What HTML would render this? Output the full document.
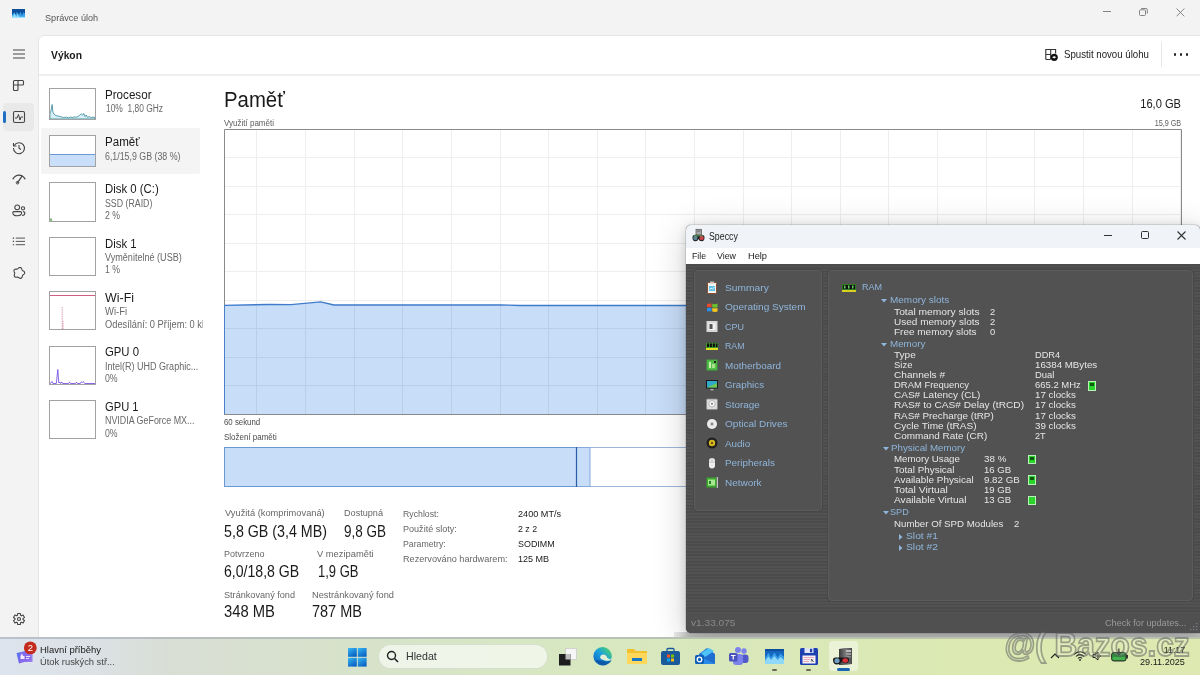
<!DOCTYPE html>
<html><head><meta charset="utf-8"><style>
html,body{margin:0;padding:0;}
body{width:1200px;height:675px;overflow:hidden;position:relative;background:#f3f3f3;font-family:"Liberation Sans", sans-serif;}
.t{position:absolute;white-space:nowrap;line-height:1;}
.r{position:absolute;}
svg.r{overflow:visible;}
</style></head><body>
<svg class="r" style="left:12px;top:8.7px" width="13" height="9" viewBox="0 0 13 9"><rect x="0" y="0" width="13" height="9" fill="#0d4f9a"/><path d="M0 6 L2.5 3 L3.5 6.5 L5 2.5 L6.5 7 L8.5 2.5 L10 6.5 L11.5 3 L13 5 V9 H0Z" fill="#3aa0ec"/><path d="M0 8 L3 4.5 L4.2 8 L6 4 L7 8 H13 V9 H0Z" fill="#8fdcfb"/><rect x="0" y="7.8" width="13" height="1.2" fill="#9ee2ff"/></svg>
<div class="t" style="left:44.8px;top:12.90px;font-size:9.8px;color:#555;font-weight:normal;transform:scaleX(0.9300);transform-origin:left 0;">Správce úloh</div>
<div class="r" style="left:1103px;top:10.5px;width:8px;height:1px;background:#858585"></div>
<svg class="r" style="left:1139px;top:7.5px" width="9" height="8" viewBox="0 0 9 8"><rect x="0.5" y="1.8" width="6" height="5.7" rx="1" fill="none" stroke="#858585" stroke-width="1"/><path d="M2.2 0.5 H7 a1.3 1.3 0 0 1 1.3 1.3 V5.6" fill="none" stroke="#858585" stroke-width="1"/></svg>
<svg class="r" style="left:1175.5px;top:7.5px" width="9" height="9" viewBox="0 0 9 9"><path d="M0.5 0.5 L8.3 8.3 M8.3 0.5 L0.5 8.3" stroke="#858585" stroke-width="1"/></svg>
<svg class="r" style="left:12px;top:48px" width="14" height="12" viewBox="0 0 14 12"><path d="M1 2H13M1 6H13M1 10H13" stroke="#444" stroke-width="1.1"/></svg>
<svg class="r" style="left:12px;top:79px" width="13" height="13" viewBox="0 0 13 13"><path d="M2.5 1.5 H10.5 A1 1 0 0 1 11.5 2.5 V5 A1 1 0 0 1 10.5 6 H6 V10.5 A1 1 0 0 1 5 11.5 H2.5 A1 1 0 0 1 1.5 10.5 V2.5 A1 1 0 0 1 2.5 1.5Z M6 1.5 V6 M1.5 6 H6" fill="none" stroke="#444" stroke-width="1.1"/></svg>
<div class="r" style="left:3px;top:103px;width:31px;height:28px;background:#e9e9e9;border-radius:4px"></div>
<div class="r" style="left:3px;top:111px;width:2.5px;height:12px;background:#1f6fc5;border-radius:2px"></div>
<svg class="r" style="left:12px;top:110px" width="14" height="14" viewBox="0 0 14 14"><rect x="1.5" y="1.5" width="11" height="11" rx="1.5" fill="none" stroke="#444" stroke-width="1.1"/><path d="M3 8 L5 8 L6.5 4.5 L8 10 L9 7 L11 7" fill="none" stroke="#444" stroke-width="1"/></svg>
<svg class="r" style="left:12px;top:141px" width="14" height="14" viewBox="0 0 14 14"><path d="M2.2 4.5 A5.5 5.5 0 1 1 1.5 7" fill="none" stroke="#444" stroke-width="1.1"/><path d="M1.5 2 V5 H4.5" fill="none" stroke="#444" stroke-width="1.1"/><path d="M7 4 V7.2 L9 8.5" fill="none" stroke="#444" stroke-width="1.1"/></svg>
<svg class="r" style="left:12px;top:173px" width="14" height="12" viewBox="0 0 14 12"><path d="M1 5.8 Q3.5 2.2 7 2.2 Q10.5 2.2 13 5.8" fill="none" stroke="#444" stroke-width="1.3" stroke-linecap="round"/><path d="M5.6 9.6 L10 3.2" stroke="#444" stroke-width="1.2" stroke-linecap="round"/><circle cx="5.5" cy="9.7" r="1.3" fill="none" stroke="#444" stroke-width="1"/></svg>
<svg class="r" style="left:11.5px;top:203.5px" width="14" height="13" viewBox="0 0 14 13"><circle cx="5.2" cy="3.3" r="2.4" fill="none" stroke="#444" stroke-width="1.05"/><path d="M1.8 7.6 H8.6 Q9.6 7.6 9.6 8.8 Q9.6 11.8 5.2 11.8 Q0.8 11.8 0.8 8.8 Q0.8 7.6 1.8 7.6Z" fill="none" stroke="#444" stroke-width="1.05"/><circle cx="11" cy="4.3" r="1.6" fill="none" stroke="#444" stroke-width="1.05"/><path d="M11 7.6 Q12.9 7.6 12.9 8.8 Q12.9 11.5 10 11.6" fill="none" stroke="#444" stroke-width="1.05"/></svg>
<svg class="r" style="left:12px;top:235px" width="14" height="12" viewBox="0 0 14 12"><path d="M3.8 3.1H13M3.8 6.4H13M3.8 9.7H13" stroke="#444" stroke-width="0.9"/><path d="M0.8 3.1H2.1M0.8 6.4H2.1M0.8 9.7H2.1" stroke="#444" stroke-width="1.1"/></svg>
<svg class="r" style="left:12px;top:266px" width="14" height="14" viewBox="0 0 14 14"><path d="M12.67 7.00 L12.45 7.57 L12.04 8.07 L11.56 8.48 L11.10 8.82 L10.74 9.16 L10.50 9.55 L10.36 10.03 L10.24 10.60 L10.06 11.21 L9.76 11.77 L9.31 12.19 L8.75 12.39 L8.14 12.36 L7.54 12.13 L7.00 11.79 L6.53 11.46 L6.10 11.22 L5.66 11.12 L5.16 11.13 L4.58 11.20 L3.94 11.21 L3.31 11.10 L2.78 10.80 L2.41 10.33 L2.26 9.74 L2.29 9.10 L2.44 8.48 L2.61 7.93 L2.71 7.45 L2.67 7.00 L2.50 6.53 L2.26 5.99 L2.05 5.39 L1.96 4.76 L2.08 4.16 L2.41 3.67 L2.93 3.34 L3.55 3.17 L4.18 3.12 L4.76 3.11 L5.24 3.06 L5.66 2.88 L6.06 2.57 L6.49 2.18 L7.00 1.79 L7.58 1.52 L8.18 1.44 L8.75 1.61 L9.23 2.00 L9.58 2.54 L9.82 3.12 L10.00 3.67 L10.21 4.11 L10.50 4.45 L10.92 4.74 L11.43 5.03 L11.95 5.39 L12.39 5.85 L12.65 6.41 L12.67 7.00Z" fill="none" stroke="#444" stroke-width="1.1" stroke-linejoin="round"/></svg>
<svg class="r" style="left:11.5px;top:612px" width="14" height="14" viewBox="0 0 14 14"><path d="M5.62 1.47 L8.38 1.47 L8.63 3.35 L9.46 3.85 L11.10 3.04 L12.48 5.43 L10.98 6.58 L10.96 7.56 L12.48 8.57 L11.10 10.96 L9.35 10.24 L8.50 10.71 L8.38 12.53 L5.62 12.53 L5.37 10.65 L4.54 10.15 L2.90 10.96 L1.52 8.57 L3.02 7.42 L3.04 6.44 L1.52 5.43 L2.90 3.04 L4.65 3.76 L5.50 3.29Z" fill="none" stroke="#444" stroke-width="1.1" stroke-linejoin="round"/><circle cx="7" cy="7" r="1.5" fill="none" stroke="#444" stroke-width="1.1"/></svg>
<div class="r" style="left:37.5px;top:35px;width:1170px;height:610px;background:#fff;border:1px solid #e6e6e6;border-radius:6px 0 0 0;box-sizing:border-box"></div>
<div class="t" style="left:50.8px;top:50.21px;font-size:11.8px;color:#1a1a1a;font-weight:bold;transform:scaleX(0.8754);transform-origin:left 0;">Výkon</div>
<div class="r" style="left:38.5px;top:74px;width:1161px;height:2px;background:#efefef"></div>
<svg class="r" style="left:1044px;top:48px" width="15" height="14" viewBox="0 0 15 14"><path d="M1.8 11.5 V1.5 H11.6 V5.5 M1.8 11.5 H6.5 M6.7 1.5 V11.5 M1.8 6.5 H7" fill="none" stroke="#333" stroke-width="1.1"/><circle cx="10.2" cy="9.3" r="3.6" fill="#111"/><path d="M8.2 9.3 L10.2 8 L12.2 9.3 L10.2 10.4Z" fill="#f0f0f0"/></svg>
<div class="t" style="left:1063.8px;top:49.07px;font-size:11.5px;color:#1a1a1a;font-weight:normal;transform:scaleX(0.8414);transform-origin:left 0;">Spustit novou úlohu</div>
<div class="r" style="left:1161px;top:42px;width:1px;height:25px;background:#e8e8e8"></div>
<div class="r" style="left:1173.8px;top:53px;width:2.6px;height:2.6px;background:#222;border-radius:50%"></div>
<div class="r" style="left:1179.8px;top:53px;width:2.6px;height:2.6px;background:#222;border-radius:50%"></div>
<div class="r" style="left:1185.8px;top:53px;width:2.6px;height:2.6px;background:#222;border-radius:50%"></div>
<div class="r" style="left:41px;top:128px;width:158.5px;height:46px;background:#f4f4f4;border-radius:2px"></div>
<svg class="r" style="left:49px;top:88px" width="47" height="32" viewBox="0 0 47 32"><rect x="0.5" y="0.5" width="46" height="31" fill="#fff" stroke="#a2a2a2" stroke-width="1"/><g transform="scale(0.979,1)"><path d="M1 30.5 L1 25 L2 23 L3.2 16.5 L4 24 L5 26 L7 27.5 L9 28 L12 28.7 L15 29.5 L18 29.2 L20 29.8 L22 29 L24 29.6 L26 28.8 L28 29.2 L30 28.2 L31.5 27 L33 25.8 L34.5 27.2 L35.5 25.5 L37 28.5 L38 27 L39.5 29.5 L41 28.5 L43 29.7 L45 29 L47 29.5 L47 31 L1 31Z" fill="#d6f0f6" stroke="#2a7f92" stroke-width="0.75"/></g><rect x="0.5" y="0.5" width="46" height="31" fill="none" stroke="#a2a2a2" stroke-width="1"/></svg>
<div class="t" style="left:105px;top:88.62px;font-size:12.5px;color:#1a1a1a;font-weight:normal;transform:scaleX(0.9296);transform-origin:left 0;">Procesor</div>
<div class="t" style="left:105.5px;top:104.33px;font-size:10px;color:#686868;font-weight:normal;transform:scaleX(0.8406);transform-origin:left 0;">10%&nbsp;&nbsp;1,80 GHz</div>
<svg class="r" style="left:49px;top:135px" width="47" height="32" viewBox="0 0 47 32"><rect x="0.5" y="0.5" width="46" height="31" fill="#fff" stroke="#a2a2a2" stroke-width="1"/><g transform="scale(0.979,1)"><rect x="1" y="19.5" width="46" height="11.5" fill="#c9def8"/><path d="M1 19.5 H47" stroke="#5a8fd4" stroke-width="0.9"/></g><rect x="0.5" y="0.5" width="46" height="31" fill="none" stroke="#a2a2a2" stroke-width="1"/></svg>
<div class="t" style="left:105px;top:135.62px;font-size:12.5px;color:#1a1a1a;font-weight:normal;transform:scaleX(0.9239);transform-origin:left 0;">Paměť</div>
<div class="t" style="left:105.3px;top:151.53px;font-size:10px;color:#686868;font-weight:normal;transform:scaleX(0.8808);transform-origin:left 0;">6,1/15,9 GB (38 %)</div>
<svg class="r" style="left:49px;top:182px" width="47" height="40" viewBox="0 0 47 40"><rect x="0.5" y="0.5" width="46" height="39" fill="#fff" stroke="#a2a2a2" stroke-width="1"/><g transform="scale(0.979,1)"><path d="M1 39 L2 36.5 L3 39" fill="none" stroke="#4e9a3a" stroke-width="0.8"/></g><rect x="0.5" y="0.5" width="46" height="39" fill="none" stroke="#a2a2a2" stroke-width="1"/></svg>
<div class="t" style="left:104.7px;top:182.92px;font-size:12.5px;color:#1a1a1a;font-weight:normal;transform:scaleX(0.9097);transform-origin:left 0;">Disk 0 (C:)</div>
<div class="t" style="left:104.7px;top:198.94px;font-size:10px;color:#686868;font-weight:normal;transform:scaleX(0.8795);transform-origin:left 0;">SSD (RAID)</div>
<div class="t" style="left:104.7px;top:211.03px;font-size:10px;color:#686868;font-weight:normal;transform:scaleX(0.8705);transform-origin:left 0;">2 %</div>
<svg class="r" style="left:49px;top:237px" width="47" height="39" viewBox="0 0 47 39"><rect x="0.5" y="0.5" width="46" height="38" fill="#fff" stroke="#a2a2a2" stroke-width="1"/><g transform="scale(0.979,1)"></g><rect x="0.5" y="0.5" width="46" height="38" fill="none" stroke="#a2a2a2" stroke-width="1"/></svg>
<div class="t" style="left:104.7px;top:237.62px;font-size:12.5px;color:#1a1a1a;font-weight:normal;transform:scaleX(0.9070);transform-origin:left 0;">Disk 1</div>
<div class="t" style="left:104.7px;top:253.03px;font-size:10px;color:#686868;font-weight:normal;transform:scaleX(0.9071);transform-origin:left 0;">Vyměnitelné (USB)</div>
<div class="t" style="left:104.7px;top:265.14px;font-size:10px;color:#686868;font-weight:normal;transform:scaleX(0.8705);transform-origin:left 0;">1 %</div>
<svg class="r" style="left:49px;top:291px" width="47" height="39" viewBox="0 0 47 39"><rect x="0.5" y="0.5" width="46" height="38" fill="#fff" stroke="#a2a2a2" stroke-width="1"/><g transform="scale(0.979,1)"><path d="M1 4.5 H47" stroke="#c84a6e" stroke-width="0.9"/><path d="M13.5 38 V16 M14.3 38 V30" fill="none" stroke="#d0708c" stroke-width="0.7" stroke-dasharray="1.5 0.8"/></g><rect x="0.5" y="0.5" width="46" height="38" fill="none" stroke="#a2a2a2" stroke-width="1"/></svg>
<div class="t" style="left:104.7px;top:291.72px;font-size:12.5px;color:#1a1a1a;font-weight:normal;transform:scaleX(0.9948);transform-origin:left 0;">Wi-Fi</div>
<div class="t" style="left:104.7px;top:307.34px;font-size:10px;color:#686868;font-weight:normal;transform:scaleX(0.9434);transform-origin:left 0;">Wi-Fi</div>
<div class="t" style="left:104.7px;top:319.84px;font-size:10px;color:#686868;font-weight:normal;transform:scaleX(0.9277);transform-origin:left 0;">Odesílání: 0 Příjem: 0 kl</div>
<svg class="r" style="left:49px;top:346px" width="47" height="39" viewBox="0 0 47 39"><rect x="0.5" y="0.5" width="46" height="38" fill="#fff" stroke="#a2a2a2" stroke-width="1"/><g transform="scale(0.979,1)"><path d="M1 37.5 L2 37 L3 35.5 L4 37.5 L7.5 37.5 L9 23.5 L10 37 L11 36 L12 37.5 L13 36 L14 37.5 L20 37.5 L21 36 L22 37.5 L27 37.5 L28 36.2 L29 37.5 L32 37.5 L33 35.8 L34 36.5 L35 35.5 L36.5 37.5 L47 37.5" fill="none" stroke="#6a40e0" stroke-width="0.8"/></g><rect x="0.5" y="0.5" width="46" height="38" fill="none" stroke="#a2a2a2" stroke-width="1"/></svg>
<div class="t" style="left:104.7px;top:345.92px;font-size:12.5px;color:#1a1a1a;font-weight:normal;transform:scaleX(0.9064);transform-origin:left 0;">GPU 0</div>
<div class="t" style="left:104.7px;top:362.24px;font-size:10px;color:#686868;font-weight:normal;transform:scaleX(0.9017);transform-origin:left 0;">Intel(R) UHD Graphic...</div>
<div class="t" style="left:104.7px;top:374.04px;font-size:10px;color:#686868;font-weight:normal;transform:scaleX(0.8718);transform-origin:left 0;">0%</div>
<svg class="r" style="left:49px;top:400px" width="47" height="39" viewBox="0 0 47 39"><rect x="0.5" y="0.5" width="46" height="38" fill="#fff" stroke="#a2a2a2" stroke-width="1"/><g transform="scale(0.979,1)"></g><rect x="0.5" y="0.5" width="46" height="38" fill="none" stroke="#a2a2a2" stroke-width="1"/></svg>
<div class="t" style="left:104.7px;top:400.62px;font-size:12.5px;color:#1a1a1a;font-weight:normal;transform:scaleX(0.8930);transform-origin:left 0;">GPU 1</div>
<div class="t" style="left:104.7px;top:416.34px;font-size:10px;color:#686868;font-weight:normal;transform:scaleX(0.8888);transform-origin:left 0;">NVIDIA GeForce MX...</div>
<div class="t" style="left:104.7px;top:428.74px;font-size:10px;color:#686868;font-weight:normal;transform:scaleX(0.8718);transform-origin:left 0;">0%</div>
<div class="r" style="left:203px;top:320px;width:10px;height:12px;background:#fff"></div>
<div class="t" style="left:223.6px;top:88.78px;font-size:22px;color:#1a1a1a;font-weight:normal;transform:scaleX(0.9251);transform-origin:left 0;">Paměť</div>
<div class="t" style="left:224.2px;top:119.00px;font-size:8.5px;color:#606060;font-weight:normal;transform:scaleX(0.9422);transform-origin:left 0;">Využití paměti</div>
<div class="t" style="right:18.700000000000045px;top:98.04px;font-size:12px;color:#1a1a1a;font-weight:normal;transform:scaleX(0.9267);transform-origin:right 0;">16,0 GB</div>
<div class="t" style="right:18.700000000000045px;top:118.80px;font-size:8.5px;color:#606060;font-weight:normal;transform:scaleX(0.8497);transform-origin:right 0;">15,9 GB</div>
<svg class="r" style="left:0;top:0" width="1200" height="675" viewBox="0 0 1200 675">
<rect x="224.5" y="129.5" width="957.0" height="285.0" fill="#fff"/>
<path d="M224 305.3 L269 304.5 L291 304.7 L320.6 301.8 L334 305 L500 304.8 L520 305.5 L1182 305.5 L1182 414.5 L224 414.5Z" fill="#c8ddf8"/>
<g stroke="#eeeeee" stroke-width="1" fill="none" style="mix-blend-mode:multiply"><path d="M224.5 157.5 H1181.5" /><path d="M224.5 186.5 H1181.5" /><path d="M224.5 214.5 H1181.5" /><path d="M224.5 243.5 H1181.5" /><path d="M224.5 271.5 H1181.5" /><path d="M224.5 300.5 H1181.5" /><path d="M224.5 328.5 H1181.5" /><path d="M224.5 357.5 H1181.5" /><path d="M224.5 385.5 H1181.5" /><path d="M256.5 129.5 V414.5" /><path d="M305.5 129.5 V414.5" /><path d="M354.5 129.5 V414.5" /><path d="M402.5 129.5 V414.5" /><path d="M451.5 129.5 V414.5" /><path d="M500.5 129.5 V414.5" /><path d="M548.5 129.5 V414.5" /><path d="M597.5 129.5 V414.5" /><path d="M645.5 129.5 V414.5" /><path d="M694.5 129.5 V414.5" /><path d="M743.5 129.5 V414.5" /><path d="M791.5 129.5 V414.5" /><path d="M840.5 129.5 V414.5" /><path d="M888.5 129.5 V414.5" /><path d="M937.5 129.5 V414.5" /><path d="M986.5 129.5 V414.5" /><path d="M1034.5 129.5 V414.5" /><path d="M1083.5 129.5 V414.5" /><path d="M1132.5 129.5 V414.5" /><path d="M1180.5 129.5 V414.5" /></g>
<path d="M224 305.3 L269 304.5 L291 304.7 L320.6 301.8 L334 305 L500 304.8 L520 305.5 L1182 305.5" fill="none" stroke="#3f7bcb" stroke-width="1.3"/>
<path d="M224.5 305 V414.5" fill="none" stroke="#4a80c8" stroke-width="1"/>
<path d="M224 414.5 H1181.5 V305" fill="none" stroke="#8a8a8a" stroke-width="1"/>
<path d="M224.5 305 V129.5 H1181.5 V305" fill="none" stroke="#8a8a8a" stroke-width="1"/>
<rect x="224.5" y="447.5" width="957" height="39" fill="#fff" stroke="#9db6da" stroke-width="1"/>
<rect x="224.5" y="447.5" width="352" height="39" fill="#c8ddf8" stroke="#6b98d2" stroke-width="1"/>
<rect x="576.5" y="447.5" width="13.5" height="39" fill="#c8ddf8" stroke="#86a9dc" stroke-width="1"/>
<path d="M576.5 447 V487" stroke="#2b5ca6" stroke-width="1.2"/>
</svg>
<div class="t" style="left:224.2px;top:417.80px;font-size:8.5px;color:#4a4a4a;font-weight:normal;transform:scaleX(0.9229);transform-origin:left 0;">60 sekund</div>
<div class="t" style="left:224.2px;top:433.20px;font-size:8.5px;color:#4a4a4a;font-weight:normal;transform:scaleX(0.9391);transform-origin:left 0;">Složení paměti</div>
<div class="t" style="left:224.5px;top:508.46px;font-size:9.5px;color:#666;font-weight:normal;transform:scaleX(0.9768);transform-origin:left 0;">Využitá (komprimovaná)</div>
<div class="t" style="left:224.2px;top:523.51px;font-size:15.7px;color:#1a1a1a;font-weight:normal;transform:scaleX(0.9081);transform-origin:left 0;">5,8 GB (3,4 MB)</div>
<div class="t" style="left:343.7px;top:508.46px;font-size:9.5px;color:#666;font-weight:normal;transform:scaleX(0.9590);transform-origin:left 0;">Dostupná</div>
<div class="t" style="left:343.7px;top:523.51px;font-size:15.7px;color:#1a1a1a;font-weight:normal;transform:scaleX(0.8594);transform-origin:left 0;">9,8 GB</div>
<div class="t" style="left:224.2px;top:548.76px;font-size:9.5px;color:#666;font-weight:normal;transform:scaleX(0.9468);transform-origin:left 0;">Potvrzeno</div>
<div class="t" style="left:224.2px;top:563.51px;font-size:15.7px;color:#1a1a1a;font-weight:normal;transform:scaleX(0.8987);transform-origin:left 0;">6,0/18,8 GB</div>
<div class="t" style="left:316.7px;top:548.76px;font-size:9.5px;color:#666;font-weight:normal;transform:scaleX(0.9835);transform-origin:left 0;">V mezipaměti</div>
<div class="t" style="left:317.5px;top:563.51px;font-size:15.7px;color:#1a1a1a;font-weight:normal;transform:scaleX(0.8287);transform-origin:left 0;">1,9 GB</div>
<div class="t" style="left:224.2px;top:589.96px;font-size:9.5px;color:#666;font-weight:normal;transform:scaleX(0.9603);transform-origin:left 0;">Stránkovaný fond</div>
<div class="t" style="left:224.2px;top:604.11px;font-size:15.7px;color:#1a1a1a;font-weight:normal;transform:scaleX(0.9425);transform-origin:left 0;">348 MB</div>
<div class="t" style="left:312px;top:589.96px;font-size:9.5px;color:#666;font-weight:normal;transform:scaleX(0.9705);transform-origin:left 0;">Nestránkovaný fond</div>
<div class="t" style="left:312px;top:604.11px;font-size:15.7px;color:#1a1a1a;font-weight:normal;transform:scaleX(0.9241);transform-origin:left 0;">787 MB</div>
<div class="t" style="left:403.2px;top:508.94px;font-size:9.4px;color:#666;font-weight:normal;transform:scaleX(0.9313);transform-origin:left 0;">Rychlost:</div>
<div class="t" style="left:518px;top:508.94px;font-size:9.4px;color:#1a1a1a;font-weight:normal;transform:scaleX(0.9728);transform-origin:left 0;">2400 MT/s</div>
<div class="t" style="left:403.2px;top:524.04px;font-size:9.4px;color:#666;font-weight:normal;transform:scaleX(0.9659);transform-origin:left 0;">Použité sloty:</div>
<div class="t" style="left:518px;top:524.04px;font-size:9.4px;color:#1a1a1a;font-weight:normal;transform:scaleX(0.9422);transform-origin:left 0;">2 z 2</div>
<div class="t" style="left:403.2px;top:539.04px;font-size:9.4px;color:#666;font-weight:normal;transform:scaleX(0.9311);transform-origin:left 0;">Parametry:</div>
<div class="t" style="left:518px;top:539.04px;font-size:9.4px;color:#1a1a1a;font-weight:normal;transform:scaleX(0.9523);transform-origin:left 0;">SODIMM</div>
<div class="t" style="left:403.2px;top:553.74px;font-size:9.4px;color:#666;font-weight:normal;transform:scaleX(0.9737);transform-origin:left 0;">Rezervováno hardwarem:</div>
<div class="t" style="left:518px;top:553.74px;font-size:9.4px;color:#1a1a1a;font-weight:normal;transform:scaleX(0.9631);transform-origin:left 0;">125 MB</div>
<div class="r" style="left:674px;top:632px;width:526px;height:6px;background:linear-gradient(90deg,rgba(235,235,235,1) 0px,rgba(235,235,235,0) 14px),linear-gradient(180deg,#d2d2d4 0%,#c8c9c8 60%,#bec1b8 100%)"></div>
<div class="r" style="left:686px;top:225px;width:514px;height:408px;background:#4e4e4e;border-radius:5px 5px 0 5px;box-shadow:0 6px 34px rgba(0,0,0,0.20), 0 2px 10px rgba(0,0,0,0.14), 0 0 0 1px rgba(0,0,0,0.10)"></div>
<div class="r" style="left:686px;top:225px;width:514px;height:23px;background:#f0f3f7;border-radius:5px 5px 0 0"></div>
<div class="r" style="left:686px;top:248px;width:514px;height:16px;background:#ffffff"></div>
<div class="r" style="left:686px;top:264px;width:514px;height:369px;background:#505050;border-radius:0 0 0 5px"></div>
<div class="r" style="left:686px;top:264px;width:514px;height:350px;background:repeating-linear-gradient(180deg,#4b4b4b 0px,#4b4b4b 1.6px,#525252 1.6px,#525252 3.3px)"></div>
<svg class="r" style="left:692px;top:229.4px" width="13" height="13" viewBox="0 0 13 13"><rect x="4" y="0.3" width="5.5" height="6.5" fill="#a8a8a8" stroke="#555" stroke-width="0.7"/><rect x="5" y="1.5" width="3.5" height="1" fill="#666"/><path d="M0.5 8.5 Q0.5 5.8 3.3 5.8 H9.7 Q12.5 5.8 12.5 8.5 Q12.5 12.3 9.7 12.3 Q7.2 12.3 6.5 10 Q5.8 12.3 3.3 12.3 Q0.5 12.3 0.5 8.5Z" fill="#1b1b1b"/><ellipse cx="3.4" cy="9" rx="2.2" ry="2.3" fill="#5a8494"/><ellipse cx="9.6" cy="9" rx="2.2" ry="2.3" fill="#c8404a"/><rect x="2" y="6.3" width="9" height="1" fill="#6cbf6c" opacity="0.8"/></svg>
<div class="t" style="left:709.3px;top:231.11px;font-size:10.5px;color:#1a1a1a;font-weight:normal;transform:scaleX(0.8364);transform-origin:left 0;">Speccy</div>
<div class="r" style="left:1104px;top:235px;width:8px;height:1px;background:#333"></div>
<div class="r" style="left:1141px;top:231px;width:8px;height:8px;border:1.2px solid #333;border-radius:1.5px;box-sizing:border-box"></div>
<svg class="r" style="left:1177px;top:231px" width="9" height="9" viewBox="0 0 9 9"><path d="M0.5 0.5 L8.5 8.5 M8.5 0.5 L0.5 8.5" stroke="#333" stroke-width="1.1"/></svg>
<div class="t" style="left:692px;top:250.96px;font-size:9.5px;color:#1a1a1a;font-weight:normal;transform:scaleX(0.9145);transform-origin:left 0;">File</div>
<div class="t" style="left:716.8px;top:250.96px;font-size:9.5px;color:#1a1a1a;font-weight:normal;transform:scaleX(0.9304);transform-origin:left 0;">View</div>
<div class="t" style="left:747.6px;top:250.96px;font-size:9.5px;color:#1a1a1a;font-weight:normal;transform:scaleX(0.9724);transform-origin:left 0;">Help</div>
<div class="r" style="left:694px;top:270px;width:128px;height:241px;background:#525252;border:1px solid #5c5c5c;border-radius:4px;box-sizing:border-box;box-shadow:0 0 0 1px #474747"></div>
<div class="r" style="left:828px;top:270px;width:365px;height:331px;background:#525252;border:1px solid #5c5c5c;border-radius:4px;box-sizing:border-box;box-shadow:0 0 0 1px #474747"></div>
<svg class="r" style="left:706px;top:281.0px" width="12" height="13" viewBox="0 0 12 13"><rect x="1.5" y="1.5" width="9" height="11" rx="1" fill="#f6f2ee" stroke="#8a4a30" stroke-width="1"/><rect x="4" y="0.5" width="4" height="2" fill="#c8c0b8"/><rect x="3" y="5" width="6" height="5" fill="#5cc0e8"/><path d="M3.5 8.5 L5 7 L6.5 8.2 L8.5 6" stroke="#fff" stroke-width="0.8" fill="none"/></svg>
<div class="t" style="left:725px;top:282.96px;font-size:9.5px;color:#8fb6dc;font-weight:normal;transform:scaleX(1.0776);transform-origin:left 0;">Summary</div>
<svg class="r" style="left:706px;top:300.5px" width="12" height="13" viewBox="0 0 12 13"><path d="M1 3 Q3 2 5.5 2.8 V6.3 Q3 5.5 1 6.3Z" fill="#e84a2a"/><path d="M6.3 2.8 Q9 3.6 11.5 2.6 V6.2 Q9 7 6.3 6.3Z" fill="#6cc22a"/><path d="M1 7 Q3 6.3 5.5 7 V10.6 Q3 9.8 1 10.6Z" fill="#2a8fe8"/><path d="M6.3 7 Q9 7.8 11.5 7 V10.6 Q9 11.4 6.3 10.6Z" fill="#f5c820"/></svg>
<div class="t" style="left:725px;top:302.46px;font-size:9.5px;color:#8fb6dc;font-weight:normal;transform:scaleX(1.0601);transform-origin:left 0;">Operating System</div>
<svg class="r" style="left:706px;top:320.0px" width="12" height="13" viewBox="0 0 12 13"><rect x="0.5" y="1" width="11" height="11" fill="#d8d8d8"/><rect x="2.5" y="3" width="7" height="7" fill="#f0f0f0"/><rect x="3.5" y="4" width="3" height="5" fill="#555"/></svg>
<div class="t" style="left:725px;top:321.96px;font-size:9.5px;color:#8fb6dc;font-weight:normal;transform:scaleX(0.9423);transform-origin:left 0;">CPU</div>
<svg class="r" style="left:706px;top:339.5px" width="12" height="13" viewBox="0 0 12 13"><rect x="0" y="3" width="12" height="6.5" fill="#3a9a2a"/><rect x="1" y="3.5" width="2.2" height="3.5" fill="#111"/><rect x="4" y="3.5" width="2.2" height="3.5" fill="#111"/><rect x="7" y="3.5" width="2.2" height="3.5" fill="#111"/><rect x="10" y="3.5" width="1.5" height="3.5" fill="#111"/><rect x="0" y="8" width="12" height="2" fill="#e0e020"/></svg>
<div class="t" style="left:725px;top:341.46px;font-size:9.5px;color:#8fb6dc;font-weight:normal;transform:scaleX(0.9237);transform-origin:left 0;">RAM</div>
<svg class="r" style="left:706px;top:359.0px" width="12" height="13" viewBox="0 0 12 13"><rect x="0.5" y="0.5" width="11" height="11" fill="#3aa83a"/><rect x="1.5" y="1.5" width="9" height="9" fill="#58c048"/><rect x="3" y="3" width="2" height="6" fill="#c8f0b0"/><rect x="6" y="5" width="3" height="4" fill="#a8e090"/><rect x="8" y="2" width="2" height="2" fill="#222"/></svg>
<div class="t" style="left:725px;top:360.96px;font-size:9.5px;color:#8fb6dc;font-weight:normal;transform:scaleX(1.0378);transform-origin:left 0;">Motherboard</div>
<svg class="r" style="left:706px;top:378.5px" width="12" height="13" viewBox="0 0 12 13"><rect x="0" y="1" width="12" height="8.5" fill="#1a1a1a"/><rect x="1" y="2" width="10" height="6.5" fill="#30a8c8"/><path d="M1 8.5 L11 4 V8.5Z" fill="#70c850"/><rect x="4.5" y="10" width="3" height="1.3" fill="#bbb"/></svg>
<div class="t" style="left:725px;top:380.46px;font-size:9.5px;color:#8fb6dc;font-weight:normal;transform:scaleX(1.0259);transform-origin:left 0;">Graphics</div>
<svg class="r" style="left:706px;top:398.0px" width="12" height="13" viewBox="0 0 12 13"><rect x="0.5" y="1" width="11" height="10.5" rx="1.2" fill="#dcdcdc" stroke="#8a8a8a" stroke-width="0.8"/><circle cx="6" cy="5.8" r="3.2" fill="#f4f4f4" stroke="#999" stroke-width="0.6"/><circle cx="6" cy="5.8" r="1" fill="#777"/></svg>
<div class="t" style="left:725px;top:399.96px;font-size:9.5px;color:#8fb6dc;font-weight:normal;transform:scaleX(1.0458);transform-origin:left 0;">Storage</div>
<svg class="r" style="left:706px;top:417.5px" width="12" height="13" viewBox="0 0 12 13"><circle cx="6" cy="6" r="5" fill="#ececec"/><circle cx="6" cy="6" r="2.2" fill="#c8c8c8"/><circle cx="6" cy="6" r="1" fill="#777"/></svg>
<div class="t" style="left:725px;top:419.46px;font-size:9.5px;color:#8fb6dc;font-weight:normal;transform:scaleX(1.0571);transform-origin:left 0;">Optical Drives</div>
<svg class="r" style="left:706px;top:437.0px" width="12" height="13" viewBox="0 0 12 13"><circle cx="6" cy="6" r="5.5" fill="#1e1e1e"/><circle cx="6" cy="6" r="3.2" fill="#d8b820"/><circle cx="6" cy="6" r="1.2" fill="#6a5a10"/></svg>
<div class="t" style="left:725px;top:438.96px;font-size:9.5px;color:#8fb6dc;font-weight:normal;transform:scaleX(1.0371);transform-origin:left 0;">Audio</div>
<svg class="r" style="left:706px;top:456.5px" width="12" height="13" viewBox="0 0 12 13"><rect x="3" y="1" width="6" height="10.5" rx="3" fill="#ececec"/><path d="M6 1 V5 M3 5 H9" stroke="#aaa" stroke-width="0.6"/></svg>
<div class="t" style="left:725px;top:458.46px;font-size:9.5px;color:#8fb6dc;font-weight:normal;transform:scaleX(1.0384);transform-origin:left 0;">Peripherals</div>
<svg class="r" style="left:706px;top:476.0px" width="12" height="13" viewBox="0 0 12 13"><rect x="0.5" y="1.5" width="10" height="10" fill="#3aa82a"/><rect x="2" y="3.5" width="7" height="6" fill="#a8e890"/><rect x="3" y="5" width="2" height="3" fill="#2a7a2a"/><path d="M11.3 1 V12" stroke="#e0e0e0" stroke-width="1"/></svg>
<div class="t" style="left:725px;top:477.96px;font-size:9.5px;color:#8fb6dc;font-weight:normal;transform:scaleX(1.0476);transform-origin:left 0;">Network</div>
<svg class="r" style="left:842px;top:284px" width="14" height="9" viewBox="0 0 14 9"><rect x="0" y="0" width="14" height="7" fill="#2e7d1e"/><rect x="1" y="1" width="12" height="4" fill="#111"/><rect x="2" y="1.5" width="1.5" height="3" fill="#6c6"/><rect x="6" y="1.5" width="1.5" height="3" fill="#6c6"/><rect x="10" y="1.5" width="1.5" height="3" fill="#6c6"/><rect x="0" y="6" width="14" height="2" fill="#d8d020"/></svg>
<div class="t" style="left:861.5px;top:282.46px;font-size:9.5px;color:#8fb6dc;font-weight:normal;transform:scaleX(0.9473);transform-origin:left 0;">RAM</div>
<svg class="r" style="left:881px;top:298.5px" width="6" height="4" viewBox="0 0 6 4"><path d="M0 0 H6 L3 3.5Z" fill="#8fb6dc"/></svg>
<div class="t" style="left:890.4px;top:294.66px;font-size:9.5px;color:#8fb6dc;font-weight:normal;transform:scaleX(1.0481);transform-origin:left 0;">Memory slots</div>
<div class="t" style="left:893.5px;top:306.76px;font-size:9.5px;color:#e6e6e6;font-weight:normal;transform:scaleX(1.0810);transform-origin:left 0;">Total memory slots</div>
<div class="t" style="left:990.4px;top:306.76px;font-size:9.5px;color:#e6e6e6;font-weight:normal;transform:scaleX(0.9842);transform-origin:left 0;">2</div>
<div class="t" style="left:893.5px;top:316.86px;font-size:9.5px;color:#e6e6e6;font-weight:normal;transform:scaleX(1.0529);transform-origin:left 0;">Used memory slots</div>
<div class="t" style="left:990.4px;top:316.86px;font-size:9.5px;color:#e6e6e6;font-weight:normal;transform:scaleX(0.9842);transform-origin:left 0;">2</div>
<div class="t" style="left:893.5px;top:326.96px;font-size:9.5px;color:#e6e6e6;font-weight:normal;transform:scaleX(1.0501);transform-origin:left 0;">Free memory slots</div>
<div class="t" style="left:990.4px;top:326.96px;font-size:9.5px;color:#e6e6e6;font-weight:normal;transform:scaleX(0.9842);transform-origin:left 0;">0</div>
<svg class="r" style="left:881px;top:342.5px" width="6" height="4" viewBox="0 0 6 4"><path d="M0 0 H6 L3 3.5Z" fill="#8fb6dc"/></svg>
<div class="t" style="left:890.4px;top:338.76px;font-size:9.5px;color:#8fb6dc;font-weight:normal;transform:scaleX(1.0289);transform-origin:left 0;">Memory</div>
<div class="t" style="left:893.5px;top:350.06px;font-size:9.5px;color:#e6e6e6;font-weight:normal;transform:scaleX(1.0536);transform-origin:left 0;">Type</div>
<div class="t" style="left:1034.7px;top:350.06px;font-size:9.5px;color:#e6e6e6;font-weight:normal;transform:scaleX(0.9743);transform-origin:left 0;">DDR4</div>
<div class="t" style="left:893.5px;top:360.14px;font-size:9.5px;color:#e6e6e6;font-weight:normal;transform:scaleX(0.9956);transform-origin:left 0;">Size</div>
<div class="t" style="left:1034.7px;top:360.14px;font-size:9.5px;color:#e6e6e6;font-weight:normal;transform:scaleX(1.0242);transform-origin:left 0;">16384 MBytes</div>
<div class="t" style="left:893.5px;top:370.22px;font-size:9.5px;color:#e6e6e6;font-weight:normal;transform:scaleX(1.0632);transform-origin:left 0;">Channels #</div>
<div class="t" style="left:1034.7px;top:370.22px;font-size:9.5px;color:#e6e6e6;font-weight:normal;transform:scaleX(0.9929);transform-origin:left 0;">Dual</div>
<div class="t" style="left:893.5px;top:380.30px;font-size:9.5px;color:#e6e6e6;font-weight:normal;transform:scaleX(0.9934);transform-origin:left 0;">DRAM Frequency</div>
<div class="t" style="left:1034.7px;top:380.30px;font-size:9.5px;color:#e6e6e6;font-weight:normal;transform:scaleX(0.9970);transform-origin:left 0;">665.2 MHz</div>
<div class="t" style="left:893.5px;top:390.38px;font-size:9.5px;color:#e6e6e6;font-weight:normal;transform:scaleX(1.0557);transform-origin:left 0;">CAS# Latency (CL)</div>
<div class="t" style="left:1034.7px;top:390.38px;font-size:9.5px;color:#e6e6e6;font-weight:normal;transform:scaleX(1.0303);transform-origin:left 0;">17 clocks</div>
<div class="t" style="left:893.5px;top:400.46px;font-size:9.5px;color:#e6e6e6;font-weight:normal;transform:scaleX(1.0660);transform-origin:left 0;">RAS# to CAS# Delay (tRCD)</div>
<div class="t" style="left:1034.7px;top:400.46px;font-size:9.5px;color:#e6e6e6;font-weight:normal;transform:scaleX(1.0303);transform-origin:left 0;">17 clocks</div>
<div class="t" style="left:893.5px;top:410.54px;font-size:9.5px;color:#e6e6e6;font-weight:normal;transform:scaleX(1.0375);transform-origin:left 0;">RAS# Precharge (tRP)</div>
<div class="t" style="left:1034.7px;top:410.54px;font-size:9.5px;color:#e6e6e6;font-weight:normal;transform:scaleX(1.0303);transform-origin:left 0;">17 clocks</div>
<div class="t" style="left:893.5px;top:420.62px;font-size:9.5px;color:#e6e6e6;font-weight:normal;transform:scaleX(1.0573);transform-origin:left 0;">Cycle Time (tRAS)</div>
<div class="t" style="left:1034.7px;top:420.62px;font-size:9.5px;color:#e6e6e6;font-weight:normal;transform:scaleX(1.0303);transform-origin:left 0;">39 clocks</div>
<div class="t" style="left:893.5px;top:430.70px;font-size:9.5px;color:#e6e6e6;font-weight:normal;transform:scaleX(1.0446);transform-origin:left 0;">Command Rate (CR)</div>
<div class="t" style="left:1034.7px;top:430.70px;font-size:9.5px;color:#e6e6e6;font-weight:normal;transform:scaleX(0.9561);transform-origin:left 0;">2T</div>
<div class="r" style="left:1088px;top:381px;width:8px;height:9.5px;background:#2bd42b;border:1px solid #b8f0b8;box-sizing:border-box"><div style="position:absolute;left:1px;top:1px;right:1px;height:3px;background:#0e5a0e"></div></div>
<svg class="r" style="left:883px;top:446.5px" width="6" height="4" viewBox="0 0 6 4"><path d="M0 0 H6 L3 3.5Z" fill="#8fb6dc"/></svg>
<div class="t" style="left:890.5px;top:443.26px;font-size:9.5px;color:#8fb6dc;font-weight:normal;transform:scaleX(1.0246);transform-origin:left 0;">Physical Memory</div>
<div class="t" style="left:893.5px;top:454.46px;font-size:9.5px;color:#e6e6e6;font-weight:normal;transform:scaleX(1.0231);transform-origin:left 0;">Memory Usage</div>
<div class="t" style="left:984.1px;top:454.46px;font-size:9.5px;color:#e6e6e6;font-weight:normal;transform:scaleX(1.0345);transform-origin:left 0;">38 %</div>
<div class="t" style="left:893.5px;top:464.66px;font-size:9.5px;color:#e6e6e6;font-weight:normal;transform:scaleX(1.0416);transform-origin:left 0;">Total Physical</div>
<div class="t" style="left:984.1px;top:464.66px;font-size:9.5px;color:#e6e6e6;font-weight:normal;transform:scaleX(1.0099);transform-origin:left 0;">16 GB</div>
<div class="t" style="left:893.5px;top:474.86px;font-size:9.5px;color:#e6e6e6;font-weight:normal;transform:scaleX(1.0432);transform-origin:left 0;">Available Physical</div>
<div class="t" style="left:984.1px;top:474.86px;font-size:9.5px;color:#e6e6e6;font-weight:normal;transform:scaleX(1.0242);transform-origin:left 0;">9.82 GB</div>
<div class="t" style="left:893.5px;top:485.06px;font-size:9.5px;color:#e6e6e6;font-weight:normal;transform:scaleX(1.0897);transform-origin:left 0;">Total Virtual</div>
<div class="t" style="left:984.1px;top:485.06px;font-size:9.5px;color:#e6e6e6;font-weight:normal;transform:scaleX(1.0099);transform-origin:left 0;">19 GB</div>
<div class="t" style="left:893.5px;top:495.26px;font-size:9.5px;color:#e6e6e6;font-weight:normal;transform:scaleX(1.0697);transform-origin:left 0;">Available Virtual</div>
<div class="t" style="left:984.1px;top:495.26px;font-size:9.5px;color:#e6e6e6;font-weight:normal;transform:scaleX(1.0099);transform-origin:left 0;">13 GB</div>
<div class="r" style="left:1027.5px;top:454.5px;width:8px;height:9.5px;background:#2bd42b;border:1px solid #b8f0b8;box-sizing:border-box"><div style="position:absolute;left:1px;top:1px;right:1px;height:3px;background:#0e5a0e"></div></div>
<div class="r" style="left:1027.5px;top:475px;width:8px;height:9.5px;background:#2bd42b;border:1px solid #b8f0b8;box-sizing:border-box"><div style="position:absolute;left:1px;top:1px;right:1px;height:3px;background:#0e5a0e"></div></div>
<div class="r" style="left:1027.5px;top:495.5px;width:8px;height:9.5px;background:#2bd42b;border:1px solid #b8f0b8;box-sizing:border-box"><div style="position:absolute;left:1px;top:1px;right:1px;height:3px;background:#2bd42b"></div></div>
<svg class="r" style="left:883px;top:510.5px" width="6" height="4" viewBox="0 0 6 4"><path d="M0 0 H6 L3 3.5Z" fill="#8fb6dc"/></svg>
<div class="t" style="left:890px;top:507.26px;font-size:9.5px;color:#8fb6dc;font-weight:normal;transform:scaleX(0.9573);transform-origin:left 0;">SPD</div>
<div class="t" style="left:893.5px;top:518.76px;font-size:9.5px;color:#e6e6e6;font-weight:normal;transform:scaleX(1.0198);transform-origin:left 0;">Number Of SPD Modules</div>
<div class="t" style="left:1013.5px;top:518.76px;font-size:9.5px;color:#e6e6e6;font-weight:normal;transform:scaleX(1.0031);transform-origin:left 0;">2</div>
<svg class="r" style="left:898.5px;top:533.5px" width="4" height="6" viewBox="0 0 4 6"><path d="M0 0 V6 L3.5 3Z" fill="#8fb6dc"/></svg>
<div class="t" style="left:906px;top:530.76px;font-size:9.5px;color:#8fb6dc;font-weight:normal;transform:scaleX(1.0819);transform-origin:left 0;">Slot #1</div>
<svg class="r" style="left:898.5px;top:545.3px" width="4" height="6" viewBox="0 0 4 6"><path d="M0 0 V6 L3.5 3Z" fill="#8fb6dc"/></svg>
<div class="t" style="left:906px;top:542.46px;font-size:9.5px;color:#8fb6dc;font-weight:normal;transform:scaleX(1.0819);transform-origin:left 0;">Slot #2</div>
<div class="t" style="left:690.7px;top:617.96px;font-size:9.5px;color:#8a8a8a;font-weight:normal;transform:scaleX(1.0664);transform-origin:left 0;">v1.33.075</div>
<div class="t" style="left:1105.3px;top:617.96px;font-size:9.5px;color:#9a9a9a;font-weight:normal;transform:scaleX(0.9574);transform-origin:left 0;">Check for updates...</div>
<svg class="r" style="left:1189px;top:622px" width="9" height="9" viewBox="0 0 9 9"><g fill="#7a7a8e"><rect x="7" y="1" width="1.3" height="1.3"/><rect x="7" y="4" width="1.3" height="1.3"/><rect x="4" y="4" width="1.3" height="1.3"/><rect x="7" y="7" width="1.3" height="1.3"/><rect x="4" y="7" width="1.3" height="1.3"/><rect x="1" y="7" width="1.3" height="1.3"/></g></svg>
<div class="r" style="left:0px;top:637px;width:1200px;height:38px;background:linear-gradient(90deg,#dde4ee 0%,#dbe1e4 8%,#d9ded5 14%,#d7e2cb 28%,#d7e7c2 45%,#d9e8ba 62%,#dce9b2 80%,#dde9b0 100%);border-top:2px solid rgba(150,158,170,0.5);box-sizing:border-box"></div>
<svg class="r" style="left:14px;top:640px" width="24" height="26" viewBox="0 0 24 26"><defs><linearGradient id="ng" x1="0" y1="0" x2="1" y2="1"><stop offset="0" stop-color="#4f7cf0"/><stop offset="1" stop-color="#9a4fe0"/></linearGradient></defs><path d="M2.5 13 L14 10.5 L17 20 L5 23.5Z" fill="url(#ng)"/><path d="M6 12.5 L18.5 12.5 L18.5 22 L6 22Z" fill="#8a6cf0" opacity="0.85"/><path d="M6.5 16 L8 13.5 L9 16 H10.5 V19 H6.5Z" fill="#f0eaff"/><path d="M12 16.5 H16 M12 18.5 H15" stroke="#e8e0ff" stroke-width="1"/><circle cx="16.3" cy="7.9" r="6.4" fill="#c42b1c"/><text x="16.3" y="11.2" font-size="9.5" fill="#fff" text-anchor="middle" font-family="Liberation Sans">2</text></svg>
<div class="t" style="left:39.7px;top:644.96px;font-size:9.5px;color:#1a1a1a;font-weight:normal;transform:scaleX(0.9958);transform-origin:left 0;">Hlavní příběhy</div>
<div class="t" style="left:39.7px;top:657.26px;font-size:9.5px;color:#444;font-weight:normal;transform:scaleX(0.9840);transform-origin:left 0;">Útok ruských stř...</div>
<svg class="r" style="left:348.3px;top:647.5px" width="19" height="19" viewBox="0 0 19 19"><defs><linearGradient id="sg" x1="0" y1="0" x2="0.6" y2="1"><stop offset="0" stop-color="#38b8f4"/><stop offset="1" stop-color="#0a62c4"/></linearGradient></defs><rect x="0" y="0" width="8.8" height="8.8" fill="url(#sg)"/><rect x="9.8" y="0" width="8.8" height="8.8" fill="url(#sg)"/><rect x="0" y="9.8" width="8.8" height="8.8" fill="url(#sg)"/><rect x="9.8" y="9.8" width="8.8" height="8.8" fill="url(#sg)"/></svg>
<div class="r" style="left:377.5px;top:644px;width:170.5px;height:24.5px;background:rgba(255,255,255,0.6);border-radius:13px;border:1px solid rgba(190,200,180,0.5);box-sizing:border-box"></div>
<svg class="r" style="left:386px;top:650px" width="13" height="13" viewBox="0 0 13 13"><circle cx="5.5" cy="5.5" r="4" fill="none" stroke="#222" stroke-width="1.4"/><path d="M8.5 8.5 L12 12" stroke="#222" stroke-width="1.6"/></svg>
<div class="t" style="left:406.3px;top:651.11px;font-size:10.5px;color:#333;font-weight:normal;transform:scaleX(1.0147);transform-origin:left 0;">Hledat</div>
<svg class="r" style="left:559px;top:647.5px" width="18" height="18" viewBox="0 0 18 18"><rect x="6.5" y="0.5" width="11" height="11" fill="#f6f6f6" stroke="#c8c8c8" stroke-width="0.7"/><rect x="0" y="6" width="11.5" height="11.5" fill="#1e1e1e"/><rect x="6.5" y="6" width="5" height="5.5" fill="#bdbdbd"/></svg>
<svg class="r" style="left:593px;top:647px" width="20" height="19" viewBox="0 0 20 19"><defs><linearGradient id="eg" x1="0" y1="1" x2="1" y2="0"><stop offset="0" stop-color="#0b5cb8"/><stop offset="0.5" stop-color="#1a9ee0"/><stop offset="1" stop-color="#55dd55"/></linearGradient></defs><circle cx="9.6" cy="9.3" r="9.2" fill="url(#eg)"/><path d="M2 13 Q6 19 12 18.2 Q16 17.5 18.6 13.3 Q14 15.5 10 13.5Z" fill="#0d4f9e" opacity="0.8"/><path d="M7 10.2 A3.4 3.1 0 0 1 13.6 9.6 Q14.5 12.3 18.8 12.6 Q15.5 14.6 11.8 13.4 Q7.6 12.4 7 10.2Z" fill="#e2efd6"/></svg>
<svg class="r" style="left:627px;top:648px" width="20" height="16" viewBox="0 0 20 16"><path d="M0 1 H7 L9 3 H20 V16 H0Z" fill="#f2c12e"/><rect x="0" y="5" width="20" height="11" fill="#ffd75a"/><rect x="5" y="10" width="10" height="3" fill="#1a78c8"/></svg>
<svg class="r" style="left:661px;top:648px" width="19" height="17" viewBox="0 0 19 17"><rect x="0" y="3" width="19" height="14" rx="2" fill="#1a5a9a"/><path d="M6 3 V1.5 A1 1 0 0 1 7 0.5 H12 A1 1 0 0 1 13 1.5 V3" fill="none" stroke="#1a5a9a" stroke-width="1.3"/><rect x="6" y="6.5" width="3" height="3" fill="#f35325"/><rect x="10" y="6.5" width="3" height="3" fill="#81bc06"/><rect x="6" y="10.5" width="3" height="3" fill="#05a6f0"/><rect x="10" y="10.5" width="3" height="3" fill="#ffba08"/></svg>
<svg class="r" style="left:695px;top:647px" width="20" height="18" viewBox="0 0 20 18"><path d="M4 7 L12 1 L20 7 V17 H4Z" fill="#1e6fd0"/><path d="M6 6 L14 1 L19 4 L10 10Z" fill="#4fc3f7"/><path d="M4 9 L20 17 H4Z" fill="#2a8ae8"/><rect x="0" y="8" width="9" height="9" rx="1.5" fill="#0f5fb8"/><circle cx="4.5" cy="12.5" r="2.3" fill="none" stroke="#fff" stroke-width="1.3"/></svg>
<svg class="r" style="left:729px;top:647px" width="20" height="18" viewBox="0 0 20 18"><circle cx="15" cy="4" r="2.7" fill="#7b83eb"/><circle cx="9" cy="3" r="3" fill="#7b83eb"/><rect x="12" y="7.5" width="7.5" height="8.5" rx="3" fill="#5059c9"/><rect x="4" y="7" width="10" height="11" rx="3" fill="#7b83eb"/><rect x="0" y="6" width="8.5" height="8.5" rx="1.5" fill="#4b53bc"/><path d="M2 8.5 H6.5 M4.25 8.5 V12.5" stroke="#fff" stroke-width="1.2"/></svg>
<svg class="r" style="left:765px;top:648.7px" width="19" height="15" viewBox="0 0 19 15"><rect x="0" y="0" width="19" height="15" fill="#1568c0"/><path d="M0 9 L3.5 4 L6 8.5 L9.5 3.5 L12.5 8.5 L15.5 4.5 L19 8 V15 H0Z" fill="#3a9ee8"/><path d="M0 12 L3.5 7.5 L6 11 L9.5 7 L12.5 11 L15.5 8 L19 11 V15 H0Z" fill="#8fd8f8"/><rect x="0" y="0" width="19" height="2.2" fill="#0e4f9e"/></svg>
<div class="r" style="left:771.5px;top:668.5px;width:5px;height:2.2px;background:#6a6a58;border-radius:1px"></div>
<svg class="r" style="left:799.5px;top:647.5px" width="18" height="17" viewBox="0 0 18 17"><rect x="0" y="0" width="18" height="17" rx="1.5" fill="#1e3fb0"/><rect x="4.5" y="0" width="9" height="5" fill="#dfe5f5"/><rect x="10" y="0.8" width="2.2" height="3.5" fill="#1e3fb0"/><rect x="2.5" y="7.5" width="13" height="8" fill="#f6f2f6"/><path d="M3.5 9.5 H14 M3.5 11.5 H10 M3.5 13.5 H9" stroke="#e07090" stroke-width="0.6"/><path d="M11 11 L13.5 14 M12.8 11.5 L11.2 13.5" stroke="#333" stroke-width="0.9"/></svg>
<div class="r" style="left:806px;top:668.5px;width:5px;height:2.2px;background:#6a6a58;border-radius:1px"></div>
<div class="r" style="left:828.8px;top:641.3px;width:29.2px;height:30px;background:rgba(255,255,255,0.45);border-radius:4px"></div>
<svg class="r" style="left:833px;top:647.5px" width="20" height="18" viewBox="0 0 20 18"><defs><linearGradient id="tw" x1="0" y1="0" x2="1" y2="0"><stop offset="0" stop-color="#3a3a3a"/><stop offset="0.5" stop-color="#7a7a7a"/><stop offset="1" stop-color="#4a4a4a"/></linearGradient></defs><path d="M6 1 L12 0 H19 V16 L12 17 H6Z" fill="url(#tw)"/><rect x="13" y="2" width="5" height="2" fill="#bdbdbd"/><rect x="13" y="5" width="5" height="2" fill="#9a9a9a"/><rect x="13" y="8" width="5" height="1.5" fill="#8a8a8a"/><path d="M0 11.5 Q0 9.5 2.5 9.5 H14 Q16 9.5 16 11.5 Q16 15.5 12.5 15.5 Q10 15.5 8.5 13.5 Q7 16.5 4 16.5 Q0 16.5 0 11.5Z" fill="#161616"/><ellipse cx="4" cy="12.8" rx="2.6" ry="2.5" fill="#6f9fc0"/><ellipse cx="12.2" cy="12.5" rx="2.8" ry="2.2" fill="#d8303a"/></svg>
<div class="r" style="left:837px;top:668.3px;width:12.5px;height:2.5px;background:#1a64b0;border-radius:1.5px"></div>
<svg class="r" style="left:1050px;top:653px" width="10" height="6" viewBox="0 0 10 6"><path d="M1 5 L5 1 L9 5" fill="none" stroke="#222" stroke-width="1.1"/></svg>
<svg class="r" style="left:1073px;top:651px" width="14" height="10" viewBox="0 0 14 10"><path d="M1 3.5 A8 8 0 0 1 13 3.5 M3 5.5 A5.2 5.2 0 0 1 11 5.5 M5 7.5 A2.6 2.6 0 0 1 9 7.5" fill="none" stroke="#222" stroke-width="1.1"/><circle cx="7" cy="9" r="0.9" fill="#222"/></svg>
<svg class="r" style="left:1092px;top:651px" width="10" height="10" viewBox="0 0 10 10"><path d="M1 3.5 H3 L6 1 V9 L3 6.5 H1Z" fill="none" stroke="#222" stroke-width="1"/><path d="M7.5 3.5 A2 2 0 0 1 7.5 6.5" fill="none" stroke="#222" stroke-width="0.9"/></svg>
<svg class="r" style="left:1110.5px;top:648px" width="18" height="14" viewBox="0 0 18 14"><rect x="0.6" y="4.5" width="14.5" height="8.5" rx="2.2" fill="#2e8f3e" stroke="#1d1d1d" stroke-width="0.9"/><rect x="1.6" y="9" width="12.5" height="3" rx="1" fill="#46b04e"/><rect x="15.3" y="6.8" width="1.6" height="3.6" rx="0.5" fill="#1d1d1d"/><path d="M7.9 0.5 V6.5 M5.8 4.6 L7.9 6.8 L10 4.6" stroke="#1d1d1d" stroke-width="1" fill="none"/></svg>
<div class="t" style="right:15.400000000000091px;top:644.66px;font-size:9.5px;color:#1a1a1a;font-weight:normal;transform:scaleX(0.9233);transform-origin:right 0;">11:17</div>
<div class="t" style="right:15px;top:656.96px;font-size:9.5px;color:#1a1a1a;font-weight:normal;transform:scaleX(0.9564);transform-origin:right 0;">29.11.2025</div>
<svg class="r" style="left:0;top:0" width="1200" height="675" viewBox="0 0 1200 675"><text x="1004.5" y="656.3" font-family="Liberation Sans" font-weight="bold" font-size="34" fill="rgba(255,255,255,0.16)" stroke="rgba(85,85,85,0.5)" stroke-width="1.8" textLength="185" lengthAdjust="spacingAndGlyphs">@( Bazos.cz</text></svg>
</body></html>
